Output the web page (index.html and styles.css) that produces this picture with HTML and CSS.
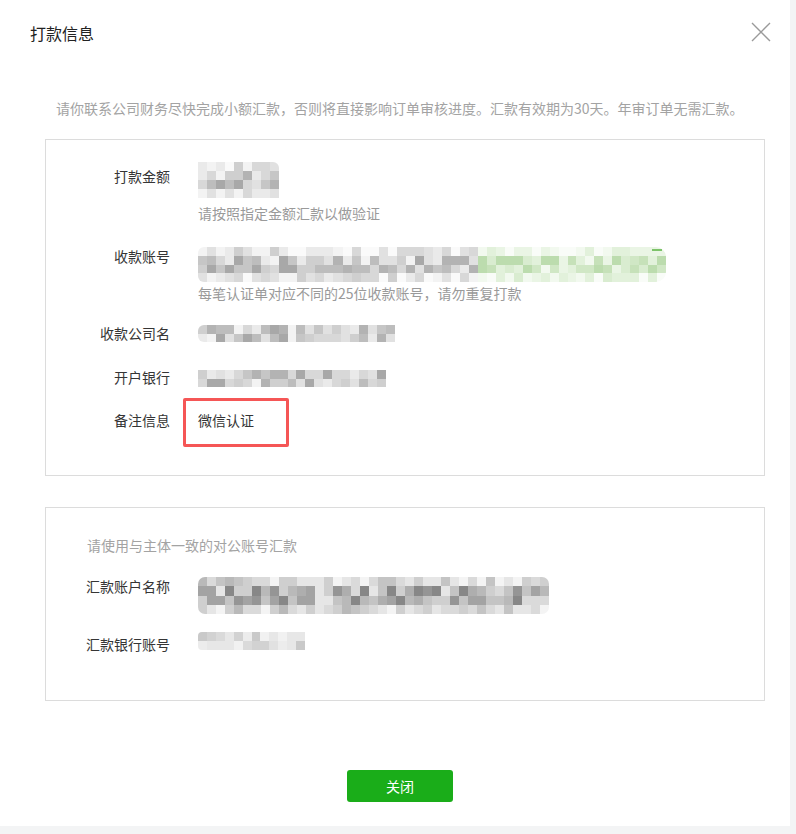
FILE: index.html
```html
<!DOCTYPE html>
<html lang="zh-CN">
<head>
<meta charset="utf-8">
<title>打款信息</title>
<link rel="stylesheet" href="styles.css">
</head>
<body>
<div class="dialog">
  <div class="dialog-hd">
    <h3 class="dialog-title">打款信息</h3>
    <button class="dialog-close" aria-label="关闭">
      <svg width="20" height="20" viewBox="0 0 20 20"><path d="M1 1 L19 19 M19 1 L1 19" stroke="#9a9a9a" stroke-width="1.4" fill="none"/></svg>
    </button>
  </div>
  <div class="dialog-bd">
    <p class="notice">请你联系公司财务尽快完成小额汇款，否则将直接影响订单审核进度。汇款有效期为30天。年审订单无需汇款。</p>

    <div class="panel panel-info">
      <div class="row row-amount">
        <div class="label">打款金额</div>
        <div class="value">
          <div class="mosaic m-amount" data-cols="9" data-rows="4" data-tone="gray" data-seed="7"></div>
          <div class="hint">请按照指定金额汇款以做验证</div>
        </div>
      </div>
      <div class="row row-account">
        <div class="label">收款账号</div>
        <div class="value">
          <div class="mosaic-line">
            <div class="mosaic m-account-gray" data-cols="31" data-rows="4" data-tone="gray" data-seed="21"></div>
            <div class="mosaic m-account-green" data-cols="21" data-rows="4" data-tone="green" data-seed="33"></div>
            <span class="green-dash"></span>
          </div>
          <div class="hint hint-account">每笔认证单对应不同的25位收款账号，请勿重复打款</div>
        </div>
      </div>
      <div class="row row-company">
        <div class="label">收款公司名</div>
        <div class="value">
          <div class="mosaic m-company" data-cols="22" data-rows="2" data-tone="gray" data-seed="45"></div>
        </div>
      </div>
      <div class="row row-bank">
        <div class="label">开户银行</div>
        <div class="value">
          <div class="mosaic m-bank" data-cols="21" data-rows="2" data-tone="gray" data-seed="58"></div>
        </div>
      </div>
      <div class="row row-remark">
        <div class="label">备注信息</div>
        <div class="value">
          <span class="remark">微信认证<span class="highlight"></span></span>
        </div>
      </div>
    </div>

    <div class="panel panel-remit">
      <p class="panel-tip">请使用与主体一致的对公账号汇款</p>
      <div class="row row-payname">
        <div class="label">汇款账户名称</div>
        <div class="value">
          <div class="mosaic m-payname" data-cols="39" data-rows="4" data-tone="dark" data-seed="77"></div>
        </div>
      </div>
      <div class="row row-payno">
        <div class="label">汇款银行账号</div>
        <div class="value">
          <div class="mosaic m-payno" data-cols="12" data-rows="2" data-tone="light" data-seed="91"></div>
        </div>
      </div>
    </div>
  </div>
  <div class="dialog-ft">
    <button class="btn-primary">关闭</button>
  </div>
</div>
<script src="app.js"></script>
</body>
</html>
```

FILE: styles.css
```css
* { box-sizing: border-box; }
html, body { margin: 0; padding: 0; }
body {
  background: #f3f4f5;
  font-family: "Noto Sans CJK SC", "Noto Sans", "Liberation Sans", sans-serif;
  font-size: 14px;
  color: #353535;
}
.dialog {
  width: 790px;
  height: 826px;
  background: #fff;
}
.dialog-hd {
  height: 66px;
  display: flex;
  align-items: center;
  justify-content: space-between;
  padding: 0 19px 2px 30px;
}
.dialog-title {
  margin: 0;
  font-size: 16px;
  font-weight: normal;
  color: #222;
  line-height: 66px;
  padding-top: 1px;
}
.dialog-close {
  border: 0;
  background: none;
  padding: 0;
  width: 20px;
  height: 20px;
  display: block;
  cursor: pointer;
}
.dialog-close svg { display: block; }
.dialog-bd {
  padding: 0 25px 0 45px;
}
.notice {
  margin: 32px 0 0;
  padding-left: 11px;
  line-height: 20px;
  color: #a3a3a3;
  white-space: nowrap;
}
.panel {
  border: 1px solid #dcdcdc;
  width: 720px;
}
.panel-info {
  margin-top: 21px;
  padding: 22px 0 45px;
}
.panel-remit {
  margin-top: 31px;
  padding: 27px 0 46px;
}
.panel-tip {
  margin: 0;
  padding-left: 41px;
  line-height: 20px;
  color: #a3a3a3;
}
.row {
  display: flex;
  align-items: flex-start;
}
.label {
  width: 124px;
  flex: none;
  text-align: right;
  line-height: 20px;
  color: #353535;
  white-space: nowrap;
}
.value {
  margin-left: 28px;
  line-height: 20px;
}
.hint {
  color: #9a9a9a;
  line-height: 20px;
}

/* row spacing */
.row-amount .label { margin-top: 4px; }
.row-amount .hint { margin-top: 5px; }
.row-account { margin-top: 24px; }
.row-account .label { margin-top: -1px; }
.row-account .hint { margin-top: 1px; }
.row-company { margin-top: 20px; }
.row-company .mosaic { margin-top: 2px; }
.row-bank { margin-top: 24px; }
.row-bank .mosaic { margin-top: 3px; }
.row-remark { margin-top: 23px; }
.row-payname { margin-top: 21px; }
.row-payname .mosaic { margin-top: 1px; }
.row-payno { margin-top: 18px; }
.row-payno .label { margin-top: 2px; }

/* mosaics (masked data) */
.mosaic {
  display: grid;
  overflow: hidden;
}
.mosaic span { display: block; }
.m-amount { width: 81px; height: 36px; border-radius: 0 6px 0 0; }
.mosaic-line { display: flex; position: relative; }
.m-account-gray { width: 280px; height: 35px; border-radius: 6px 0 0 6px; }
.m-account-green { width: 188px; height: 35px; border-radius: 0 10px 10px 0; }
.green-dash {
  position: absolute;
  left: 454px;
  top: 2px;
  width: 10px;
  height: 2px;
  background: #7dc36a;
}
.m-company { width: 197px; height: 17px; border-radius: 6px 0 0 6px; }
.m-bank { width: 188px; height: 17px; }
.m-payname { width: 351px; height: 37px; border-radius: 7px; }
.m-payno { width: 107px; height: 18px; border-radius: 4px 0 0 4px; }

.remark {
  position: relative;
  display: inline-block;
  color: #353535;
}
.highlight {
  position: absolute;
  left: -15px;
  top: -12px;
  width: 106px;
  height: 49px;
  border: 3px solid #f55656;
  border-radius: 2px;
}

.dialog-ft {
  display: flex;
  justify-content: center;
  padding: 69px 0 0 10px;
}
.btn-primary {
  width: 106px;
  height: 32px;
  border: 0;
  border-radius: 3px;
  background: #1aad19;
  color: #fff;
  font-family: inherit;
  font-size: 14px;
  cursor: pointer;
}
```

FILE: app.js
```js
(function () {
  var palettes = {
    gray: ['#a8a8a8', '#b3b3b3', '#bdbdbd', '#c6c6c6', '#cfcfcf', '#d8d8d8', '#e1e1e1', '#eaeaea', '#f3f3f3', '#fafafa'],
    dark: ['#878787', '#959595', '#a3a3a3', '#aeaeae', '#b9b9b9', '#c4c4c4', '#cfcfcf', '#dadada', '#e6e6e6', '#f4f4f4'],
    light: ['#c9c9c9', '#d2d2d2', '#dadada', '#e1e1e1', '#e7e7e7', '#ececec', '#f1f1f1', '#f6f6f6'],
    green: ['#bcdcae', '#c6e1b9', '#d0e7c5', '#d9ecd0', '#e2f1db', '#eaf5e5', '#f2f9ef', '#f9fcf8']
  };
  function rng(seed) {
    var s = seed * 9973 % 2147483647;
    if (s <= 0) s += 2147483646;
    return function () {
      s = s * 16807 % 2147483647;
      return (s - 1) / 2147483646;
    };
  }
  var els = document.querySelectorAll('.mosaic');
  for (var i = 0; i < els.length; i++) {
    var el = els[i];
    var cols = +el.getAttribute('data-cols');
    var rows = +el.getAttribute('data-rows');
    var pal = palettes[el.getAttribute('data-tone')] || palettes.gray;
    var rand = rng(+el.getAttribute('data-seed'));
    el.style.gridTemplateColumns = 'repeat(' + cols + ', 1fr)';
    el.style.gridTemplateRows = 'repeat(' + rows + ', 1fr)';
    for (var r = 0; r < rows; r++) {
      var edge = rows > 2 && (r === 0 || r === rows - 1);
      for (var c = 0; c < cols; c++) {
        var t = rand();
        var idx;
        if (edge) {
          idx = Math.floor(pal.length * 0.45 + t * pal.length * 0.55);
        } else {
          idx = Math.floor(t * pal.length * 0.85);
        }
        if (idx >= pal.length) idx = pal.length - 1;
        var cell = document.createElement('span');
        cell.style.background = pal[idx];
        el.appendChild(cell);
      }
    }
  }
})();
```
